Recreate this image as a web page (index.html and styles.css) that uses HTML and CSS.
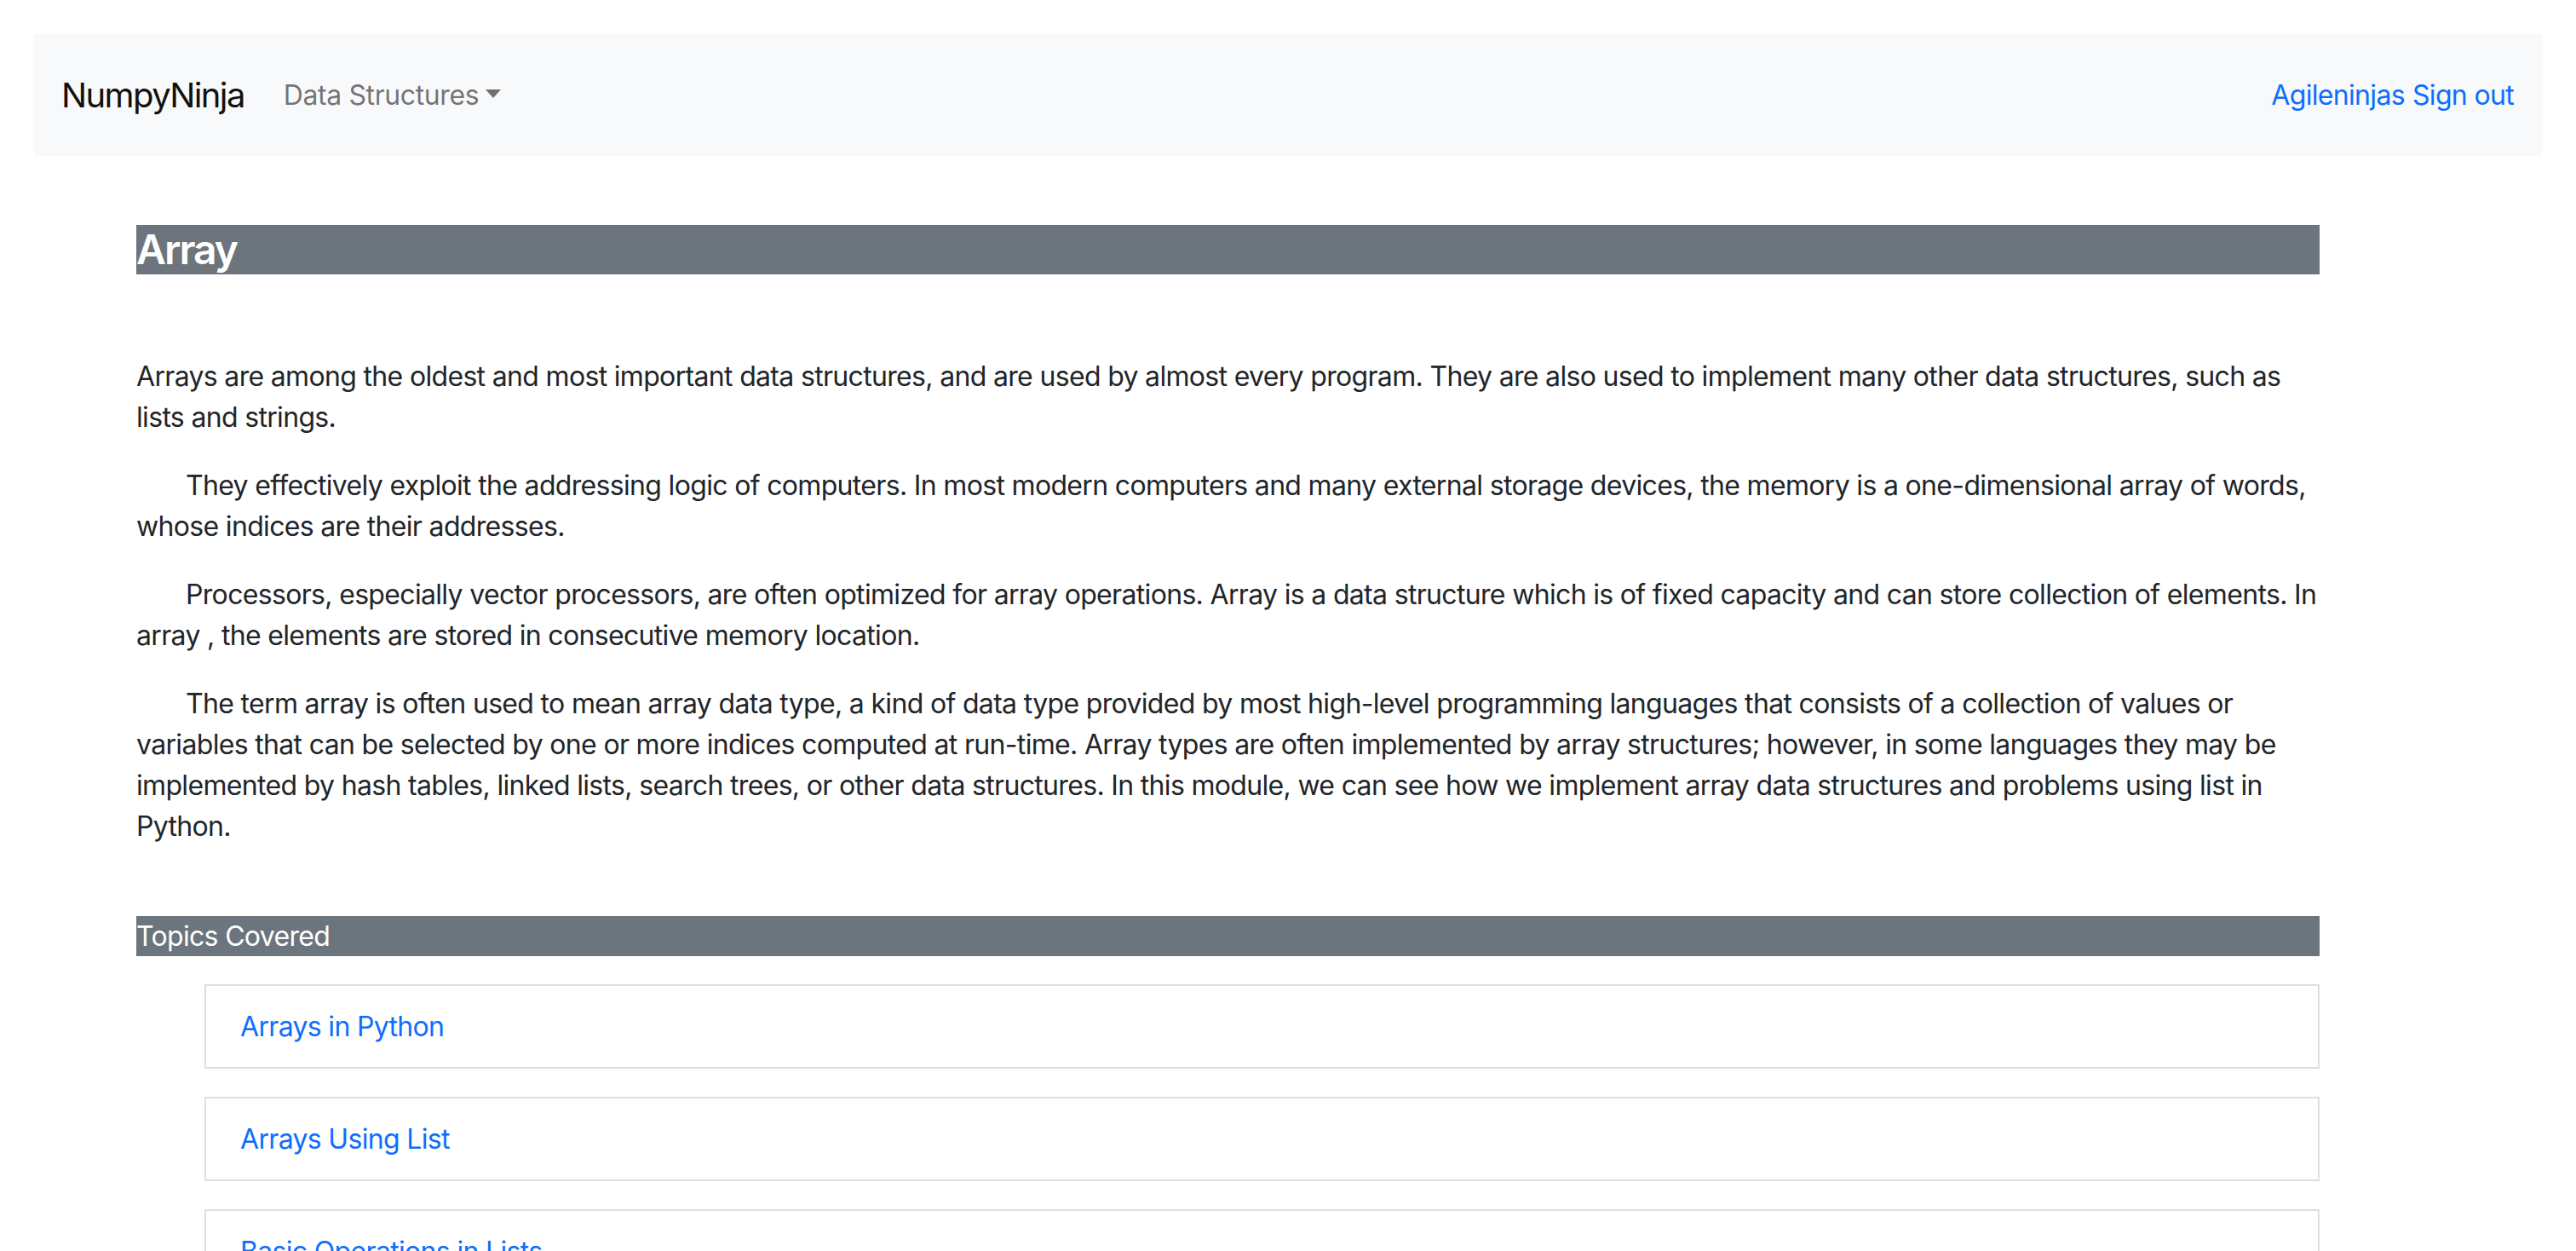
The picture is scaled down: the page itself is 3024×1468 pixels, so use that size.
FILE: index.html
```html
<!DOCTYPE html>
<html lang="en">
<head>
<meta charset="utf-8">
<title>Array</title>
<link rel="stylesheet" href="styles.css">
</head>
<body>
<nav class="navbar">
  <div class="nav-left">
    <a class="brand" href="#">NumpyNinja</a>
    <a class="nav-link dropdown-toggle" href="#">Data Structures</a>
  </div>
  <div class="nav-right">
    <a class="user-link" href="#">Agileninjas</a>
    <a class="user-link" href="#">Sign out</a>
  </div>
</nav>

<main class="content">
  <h3 class="title-bar">Array</h3>

  <p class="lead-para">Arrays are among the oldest and most important data structures, and are used by almost every program. They are also used to implement many other data structures, such as lists and strings.</p>
  <p class="indent">They effectively exploit the addressing logic of computers. In most modern computers and many external storage devices, the memory is a one-dimensional array of words, whose indices are their addresses.</p>
  <p class="indent">Processors, especially vector processors, are often optimized for array operations. Array is a data structure which is of fixed capacity and can store collection of elements. In array , the elements are stored in consecutive memory location.</p>
  <p class="indent">The term array is often used to mean array data type, a kind of data type provided by most high-level programming languages that consists of a collection of values or variables that can be selected by one or more indices computed at run-time. Array types are often implemented by array structures; however, in some languages they may be implemented by hash tables, linked lists, search trees, or other data structures. In this module, we can see how we implement array data structures and problems using list in Python.</p>

  <div class="topics-bar">Topics Covered</div>

  <ul class="topic-list">
    <li class="topic-card"><a href="#">Arrays in Python</a></li>
    <li class="topic-card"><a href="#">Arrays Using List</a></li>
    <li class="topic-card"><a href="#">Basic Operations in Lists</a></li>
    <li class="topic-card"><a href="#">Applications of Array</a></li>
  </ul>
</main>
</body>
</html>
```

FILE: styles.css
```css
html, body {
  margin: 0;
  padding: 0;
  background: #ffffff;
}

body {
  padding: 40px 40px 0 40px;
  font-family: Inter, "Liberation Sans", sans-serif;
  font-size: 32px;
  line-height: 48px;
  letter-spacing: -0.67px;
  color: #212529;
}

a {
  text-decoration: none;
}

.navbar {
  display: flex;
  align-items: center;
  justify-content: space-between;
  height: 143px;
  padding: 0 33px 0 32px;
  background: #f8f9fa;
}

.nav-left {
  display: flex;
  align-items: center;
}

.brand {
  font-size: 40px;
  line-height: 60px;
  letter-spacing: -1.6px;
  color: #111111;
  margin-right: 46px;
}

.nav-link {
  font-size: 32px;
  letter-spacing: -0.4px;
  color: rgba(0, 0, 0, 0.55);
}

.dropdown-toggle::after {
  content: "";
  display: inline-block;
  margin-left: 8px;
  vertical-align: 8px;
  border-top: 10px solid;
  border-left: 9px solid transparent;
  border-right: 9px solid transparent;
  border-bottom: 0;
}

.nav-right {
  display: flex;
  gap: 9px;
}

.user-link {
  color: #0d6efd;
  font-size: 32px;
}

.content {
  margin: 81px 261px 0 120px;
}

.title-bar {
  margin: 0;
  background: #6c757d;
  color: #ffffff;
  font-size: 48px;
  line-height: 58px;
  font-weight: 600;
  letter-spacing: -2px;
}

.lead-para {
  margin-top: 96px;
}

p {
  margin: 0 0 32px 0;
}

.indent {
  text-indent: 58px;
}

.topics-bar {
  margin-top: 81px;
  background: #6c757d;
  color: #ffffff;
  line-height: 47px;
}

.topic-list {
  list-style: none;
  margin: 33px 0 0 80px;
  padding: 0;
  display: flex;
  flex-direction: column;
  gap: 33px;
}

.topic-card {
  border: 2px solid #dedede;
  padding: 24px 40px;
  line-height: 47px;
}

.topic-card a {
  color: #0d6efd;
}
```
